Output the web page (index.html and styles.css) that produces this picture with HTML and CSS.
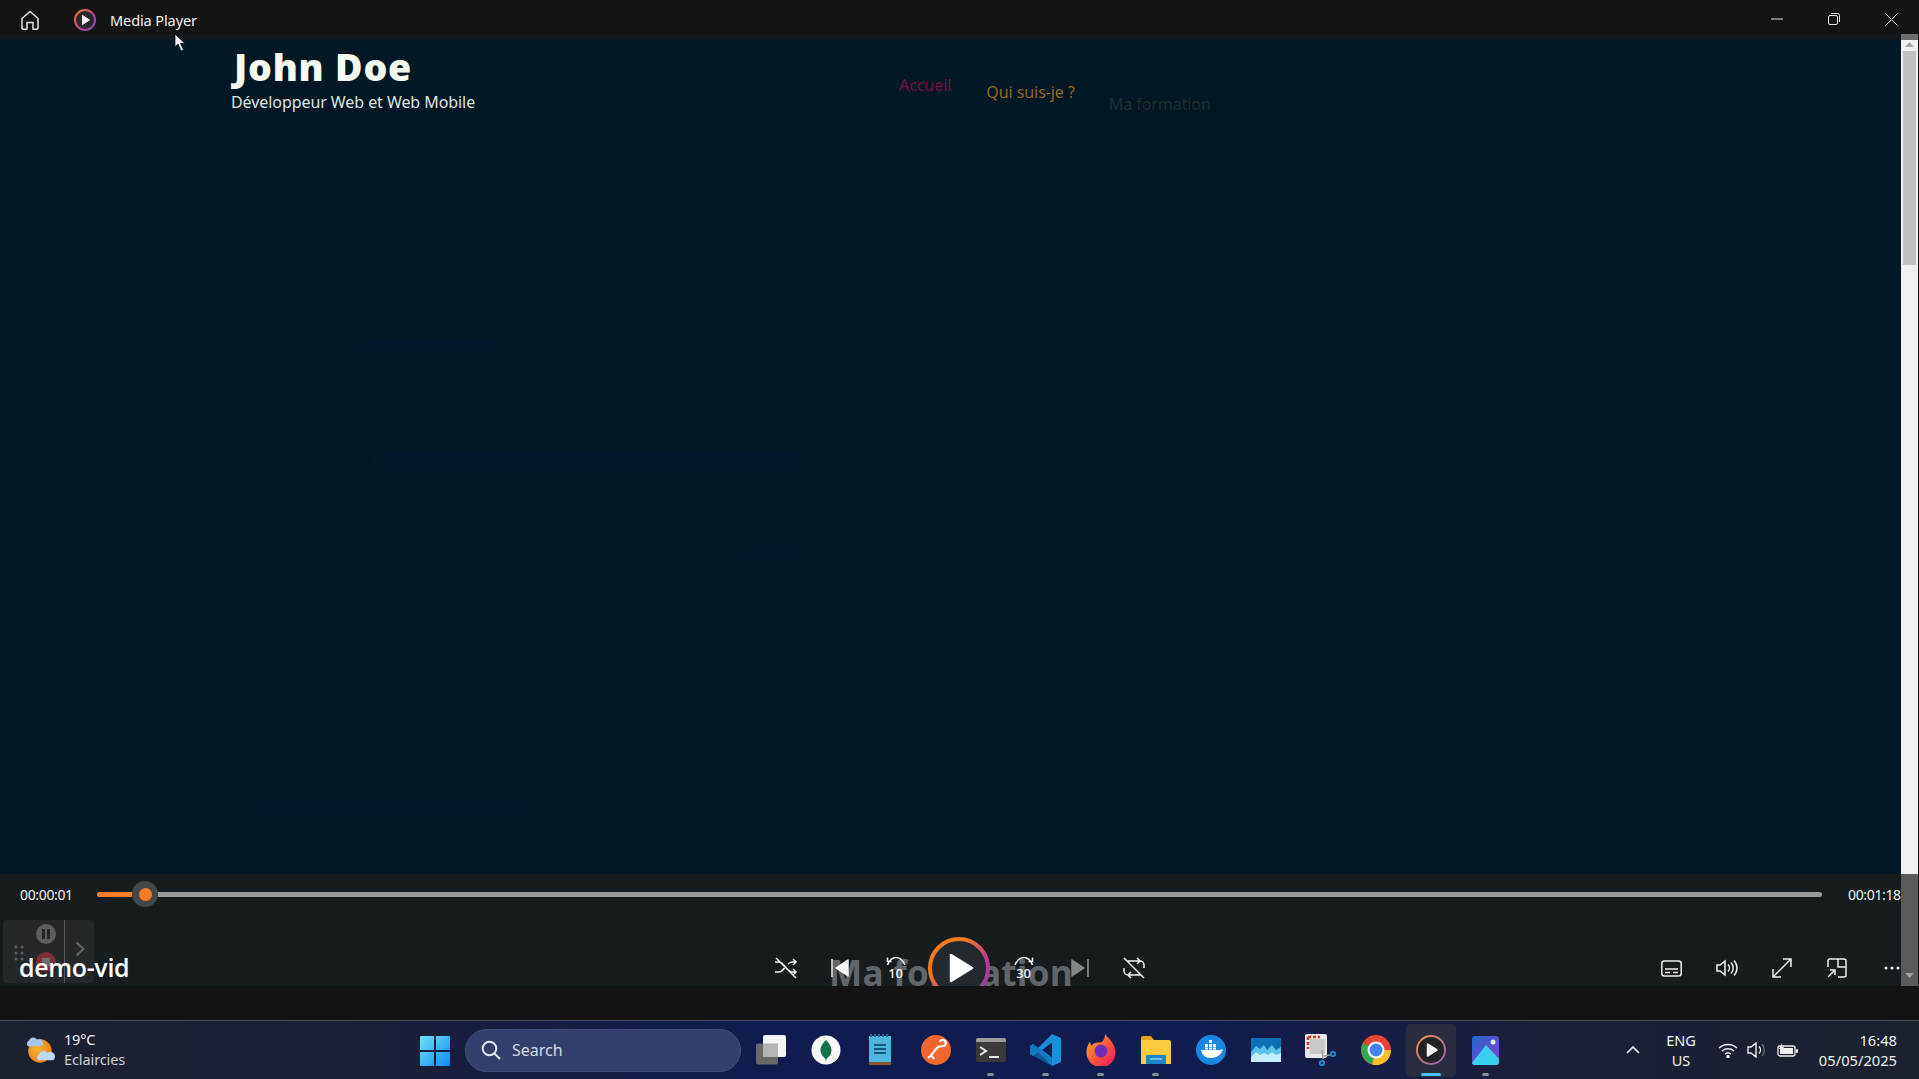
FILE: index.html
```html
<!DOCTYPE html>
<html lang="fr">
<head>
<meta charset="utf-8">
<title>Media Player</title>
<link rel="stylesheet" href="styles.css">
</head>
<body>
<div class="app">
  <header class="titlebar">
    <svg class="home-icon" width="22" height="22" viewBox="0 0 22 22" fill="none" stroke="#e8e8e8" stroke-width="1.5" stroke-linejoin="round"><path d="M3 9.5 11 2.5l8 7V19a1.2 1.2 0 0 1-1.2 1.2H14V13.5H8v6.700H4.200A1.200 1.200 0 0 1 3 19Z"/></svg>
    <svg class="app-logo" width="24" height="24" viewBox="0 0 24 24">
      <defs><linearGradient id="ringa" x1="0" y1="0" x2="1" y2="1"><stop offset="0" stop-color="#f47b20"/><stop offset=".6" stop-color="#b3429a"/><stop offset="1" stop-color="#7b4fc0"/></linearGradient></defs>
      <circle cx="12" cy="12" r="10" fill="#2a2a2e" stroke="url(#ringa)" stroke-width="2"/>
      <path d="M9.500 7.500v9l7-4.500Z" fill="#f2f2f2" stroke="#f2f2f2" stroke-linejoin="round"/>
    </svg>
    <span class="app-name">Media Player</span>
    <div class="win-buttons">
      <svg width="12" height="12" viewBox="0 0 12 12" stroke="#e6e6e6" fill="none"><path d="M0 6h12"/></svg>
      <svg width="12" height="12" viewBox="0 0 12 12" stroke="#e6e6e6" fill="none"><rect x=".5" y="2.500" width="9" height="9" rx="1.500"/><path d="M3 .5h6.500a2 2 0 0 1 2 2V9"/></svg>
      <svg width="13" height="13" viewBox="0 0 13 13" stroke="#e6e6e6" fill="none"><path d="M.5.5l12 12M12.500.5l-12 12"/></svg>
    </div>
  </header>

  <div class="viewport">
    <div class="player">
      <div class="strip"></div>
      <main class="video">
        <div class="site-header">
          <div class="brand">
            <h1 class="brand-name">John Doe</h1>
            <p class="brand-role">Développeur Web et Web Mobile</p>
          </div>
          <nav class="site-nav">
            <a class="nav-a">Accueil</a>
            <a class="nav-b">Qui suis-je ?</a>
            <a class="nav-c">Ma formation</a>
          </nav>
        </div>
        <i class="ghost ghost-1"></i>
        <i class="ghost ghost-2"></i>
        <i class="ghost ghost-3"></i>
        <i class="ghost ghost-4"></i>
        <i class="ghost ghost-5"></i>
        <i class="ghost ghost-6"></i>
        <i class="ghost ghost-7"></i>
      </main>
      <section class="controls">
        <div class="seek-row">
          <span class="time">00:00:01</span>
          <div class="seek">
            <div class="seek-done"></div>
            <div class="seek-knob"><div class="seek-dot"></div></div>
            <div class="seek-rest"></div>
          </div>
          <span class="time time-end">00:01:18</span>
        </div>
        <div class="float-widget">
          <svg class="grip" width="10" height="16" viewBox="0 0 10 16" fill="#5c6062"><circle cx="2" cy="2" r="1.500"/><circle cx="8" cy="2" r="1.500"/><circle cx="2" cy="8" r="1.500"/><circle cx="8" cy="8" r="1.500"/><circle cx="2" cy="14" r="1.500"/><circle cx="8" cy="14" r="1.500"/></svg>
          <div class="rec-btns">
            <span class="rec-pause"><i></i><i></i></span>
            <span class="rec-stop"><i></i></span>
          </div>
          <div class="widget-side"><svg width="10" height="16" viewBox="0 0 10 16" fill="none" stroke="#63676a" stroke-width="2"><path d="M1.500 1.500 8.500 8l-7 6.500"/></svg></div>
        </div>
        <div class="video-title">demo-vid</div>
        <div class="ghost-title">Ma formation</div>
        <div class="center-btns">
          <svg width="24" height="22" viewBox="0 0 24 22" fill="none" stroke="#f4f4f4" stroke-width="1.500"><path d="M1 5h4c5 0 8 10 13 10h4M19 12l3 3-3 3M1 15h4c2 0 4-2 5.500-4M14 7c1.200-1 2.500-2 4-2h4M19 2l3 3-3 3M2 1l20 20"/></svg>
          <svg width="20" height="20" viewBox="0 0 20 20"><path d="M1 1v18" stroke="#e8e8e8" stroke-width="1.500"/><path d="M17 2v16L5 10Z" fill="#f4f4f4" stroke="#f4f4f4" stroke-width="1.500" stroke-linejoin="round"/></svg>
          <span class="skip">
            <svg width="22" height="10" viewBox="0 0 22 10" fill="none" stroke="#f4f4f4" stroke-width="1.500"><path d="M2.500 9C4 4 8 1.500 11 1.500S18 4 20 9M2.500 1.500v4h4"/></svg>
            <span class="skip-num">10</span>
          </span>
          <svg width="62" height="62" viewBox="0 0 62 62">
            <defs><linearGradient id="ringb" x1="0" y1="0" x2="1" y2="1"><stop offset=".3" stop-color="#f07a1e"/><stop offset=".65" stop-color="#c03a90"/><stop offset="1" stop-color="#8a3fa8"/></linearGradient></defs>
            <circle cx="31" cy="31" r="29" fill="#24292d" stroke="url(#ringb)" stroke-width="4"/>
            <path d="M23 18v26l21-13Z" fill="#fff" stroke="#fff" stroke-width="2.500" stroke-linejoin="round"/>
          </svg>
          <span class="skip">
            <svg width="22" height="10" viewBox="0 0 22 10" fill="none" stroke="#f4f4f4" stroke-width="1.500"><path d="M2 9C4 4 8 1.500 11 1.500S18 4 19.500 9M19.500 1.500v4h-4"/></svg>
            <span class="skip-num">30</span>
          </span>
          <svg width="20" height="20" viewBox="0 0 20 20"><path d="M19 1v18" stroke="#9a9c9d" stroke-width="1.500"/><path d="M3 2v16l12-8Z" fill="#85888a" stroke="#85888a" stroke-width="1.500" stroke-linejoin="round"/></svg>
          <svg width="24" height="24" viewBox="0 0 24 24" fill="none" stroke="#f4f4f4" stroke-width="1.500"><path d="M5 5h13a4 4 0 0 1 4 4v3M15 2l3 3-3 3M19 19H6a4 4 0 0 1-4-4v-3M9 22l-3-3 3-3M2 2l20 20"/></svg>
        </div>
        <div class="right-btns">
          <svg width="21" height="17" viewBox="0 0 21 17" fill="none" stroke="#eee" stroke-width="1.500"><rect x=".8" y="1" width="19.400" height="15" rx="2.500"/><path d="M4 9h13M4 12.500h5M12 12.500h5"/></svg>
          <svg width="22" height="18" viewBox="0 0 22 18" fill="none" stroke="#eee" stroke-width="1.500"><path d="M1 6h3l5-4v14l-5-4H1ZM12 5.500a5 5 0 0 1 0 7M15 3.500a8 8 0 0 1 0 11M18 1.500a11 11 0 0 1 0 15"/></svg>
          <svg width="20" height="20" viewBox="0 0 20 20" fill="none" stroke="#eee" stroke-width="1.500"><path d="M1.500 18.500l17-17M11 1h8v8M1 11v8h8"/></svg>
          <svg width="20" height="20" viewBox="0 0 20 20" fill="none" stroke="#eee" stroke-width="1.500"><path d="M1 9V3a2 2 0 0 1 2-2h14a2 2 0 0 1 2 2v14a2 2 0 0 1-2 2h-6M11 1v8h8M1 19l7-7M3 12h5v5"/></svg>
          <svg width="16" height="4" viewBox="0 0 16 4" fill="#f4f4f4"><circle cx="2" cy="2" r="1.500"/><circle cx="8" cy="2" r="1.500"/><circle cx="14" cy="2" r="1.500"/></svg>
        </div>
      </section>
    </div>
    <aside class="scrollbar">
      <div class="sb-cap"></div>
      <div class="sb-track">
        <svg class="sb-up" width="9" height="5" viewBox="0 0 9 5" fill="#a6a6a6"><path d="M4.500 0 9 5H0Z"/></svg>
        <div class="sb-thumb"></div>
      </div>
      <div class="sb-lower">
        <svg width="9" height="5" viewBox="0 0 9 5" fill="#a0a0a0"><path d="M4.500 5 0 0h9Z"/></svg>
      </div>
    </aside>
    <div class="edge"></div>
  </div>

  <div class="band"></div>

  <footer class="taskbar">
    <div class="weather">
      <svg width="32" height="30" viewBox="0 0 34 32">
        <defs><radialGradient id="sun" cx=".4" cy=".4" r=".7"><stop offset="0" stop-color="#fbb636"/><stop offset="1" stop-color="#e8790e"/></radialGradient></defs>
        <circle cx="17" cy="17" r="12.500" fill="url(#sun)"/>
        <path d="M4 12a4 4 0 0 1 1-6 5 5 0 0 1 9-1 4 4 0 0 1 4 7Z" fill="#a9c9ec"/>
        <path d="M15 27a3.500 3.500 0 0 1 1-6 5 5 0 0 1 9-2 4 4 0 0 1 6 8Z" fill="#bfd7f2"/>
      </svg>
      <div class="weather-text"><span class="temp">19°C</span><span class="cond">Eclaircies</span></div>
    </div>
    <div class="task-center">
      <span class="task-item">
        <svg width="30" height="31" viewBox="0 0 30 31">
          <defs><linearGradient id="win" x1="0" y1="0" x2="1" y2="1"><stop offset="0" stop-color="#6fe0fb"/><stop offset="1" stop-color="#0f8df0"/></linearGradient></defs>
          <path d="M1 1h13v14H0V2a1 1 0 0 1 1-1ZM16 1h13a1 1 0 0 1 1 1v13H16ZM0 17h14v14H1a1 1 0 0 1-1-1ZM16 17h14v13a1 1 0 0 1-1 1H16Z" fill="url(#win)"/>
        </svg>
      </span>
      <div class="searchbox">
        <svg width="20" height="20" viewBox="0 0 20 20" fill="none" stroke="#dfe3ee" stroke-width="2"><circle cx="8.500" cy="8.500" r="6.800"/><path d="M13.500 13.500l5.500 5.500"/></svg>
        <span>Search</span>
      </div>
      <span class="task-item">
        <svg width="30" height="30" viewBox="0 0 30 30"><rect x="0" y="8.500" width="22" height="21" rx="2" fill="#696969"/><rect x="7" y="0" width="23" height="22" rx="2" fill="#f4f4f4"/><rect x="7" y="8.500" width="15" height="13.500" fill="#b4b4b4"/></svg>
      </span>
      <span class="task-item">
        <svg width="30" height="30" viewBox="0 0 30 30"><circle cx="15" cy="15" r="14.500" fill="#fafafa"/><path d="M15 5c4 4 5.500 7 5.500 10.500S18 22 15.500 24l-.5 3-.5-3C12 22 9.500 19 9.500 15.500S11 9 15 5Z" fill="#12734a"/></svg>
      </span>
      <span class="task-item">
        <svg width="23" height="32" viewBox="0 0 23 32"><rect x="0" y="2" width="22" height="26" fill="#4db6de"/><rect y="28" width="22" height="3" fill="#8a5a2e"/><path d="M5 11h12M5 15h12M5 19h12" stroke="#10597a" stroke-width="2"/><path d="M2 0v3M6 0v3M10 0v3M14 0v3M18 0v3" stroke="#1c6a8c" stroke-width="2"/></svg>
      </span>
      <span class="task-item">
        <svg width="30" height="30" viewBox="0 0 30 30"><circle cx="15" cy="15" r="15" fill="#f2672e"/><path d="M7 23c3-2 5-5 7-8l4-4M19 7a3 3 0 1 1 3 4l-5 1M11 21l2 3" fill="none" stroke="#fff" stroke-width="2.200"/></svg>
      </span>
      <span class="task-item running">
        <svg width="30" height="24" viewBox="0 0 30 24"><rect width="30" height="24" rx="2" fill="#3a3a3a"/><path d="M0 2a2 2 0 0 1 2-2h26a2 2 0 0 1 2 2v2H0Z" fill="#9c9c9c"/><path d="M4 9l6 4-6 4" fill="none" stroke="#eee" stroke-width="2"/><path d="M13 19h10" stroke="#eee" stroke-width="2"/></svg>
      </span>
      <span class="task-item running">
        <svg width="31" height="32" viewBox="0 0 31 32"><path d="M22 0l9 4v24l-9 4L8 18l-5 4-3-2V12l3-2 5 4Z" fill="#1a8fd8"/><path d="M22 8.500 12 16l10 7.500Z" fill="#0c1f52"/><path d="M0 12l3-2 19 14v8L0 20Z" fill="#0f6fb8" opacity=".7"/></svg>
      </span>
      <span class="task-item running">
        <svg width="30" height="32" viewBox="0 0 30 32">
          <defs><linearGradient id="ffx" x1="0" y1="0" x2="1" y2="1"><stop offset="0" stop-color="#ffb02a"/><stop offset=".55" stop-color="#ff4f3a"/><stop offset="1" stop-color="#e0186c"/></linearGradient></defs>
          <path d="M19 0c2 3 9 8 10 15a14.500 14.500 0 1 1-28.500 3C.5 14 2 10 4 7.500c0 2 .5 3 2 4C8 8 12 9 16 8c2-2 3-5 3-8Z" fill="url(#ffx)"/>
          <circle cx="15" cy="17" r="6.500" fill="#6c2dbd"/>
        </svg>
      </span>
      <span class="task-item running">
        <svg width="30" height="28" viewBox="0 0 30 28"><path d="M0 2a2 2 0 0 1 2-2h8l3 4H0Z" fill="#e0a31c"/><path d="M0 4h28a2 2 0 0 1 2 2v22H0Z" fill="#fccc3e"/><rect x="5" y="19" width="20" height="9" rx="1" fill="#1a86c8"/><rect x="9" y="22" width="12" height="1.800" fill="#7cc6ec"/></svg>
      </span>
      <span class="task-item">
        <svg width="30" height="30" viewBox="0 0 30 30"><circle cx="15" cy="15" r="15" fill="#1a87e2"/><path d="M5 15h19c1 0 2-1 3-1-1 5-6 9-12 9-6 0-9-3-10-8Z" fill="#fff"/><path d="M9 9h3v3H9ZM13 9h3v3h-3ZM13 5h3v3h-3ZM17 9h3v3h-3ZM9 12.500h3v2H9ZM13 12.500h3v2h-3ZM17 12.500h3v2h-3Z" fill="#fff"/></svg>
      </span>
      <span class="task-item">
        <svg width="30" height="24" viewBox="0 0 30 24"><rect width="30" height="24" fill="#0f6db4"/><path d="M0 14l5-6 4 3 4-4 3 5 5-5 4 5 5-3v15H0Z" fill="#5cc0e8"/><path d="M0 19l5-5 4 3 4-2 4 2 4-3 4 3 5-2v9H0Z" fill="#c4ecfa"/></svg>
      </span>
      <span class="task-item">
        <svg width="31" height="32" viewBox="0 0 31 32"><rect width="22" height="24" rx="2" fill="#e8e8ea"/><rect x="5" y="5" width="15" height="15" fill="#c8c8c8"/><path d="M3 3h12M3 3v12" stroke="#d03a24" stroke-width="2.500" stroke-dasharray="3 2" fill="none"/><path d="M17 16l1 9M19 22l6-1" stroke="#9a9a9a" stroke-width="1.500"/><circle cx="17" cy="29" r="2.200" fill="none" stroke="#1a8fd8" stroke-width="1.800"/><circle cx="28" cy="20" r="2.200" fill="none" stroke="#1a8fd8" stroke-width="1.800"/></svg>
      </span>
      <span class="task-item">
        <svg width="30" height="30" viewBox="0 0 30 30"><circle cx="15" cy="15" r="15" fill="#ea4335"/><path d="M15 15 2 8A15 15 0 0 0 11 29.500Z" fill="#34a853"/><path d="M15 15h15a15 15 0 0 1-19 14.500Z" fill="#fbc02d"/><circle cx="15" cy="15" r="7.500" fill="#3f82f0" stroke="#fff" stroke-width="2"/></svg>
      </span>
      <span class="task-item active">
        <svg width="30" height="30" viewBox="0 0 30 30">
          <defs><linearGradient id="ringc" x1="0" y1="0" x2="1" y2="1"><stop offset="0" stop-color="#f2924a"/><stop offset="1" stop-color="#8a5fb8"/></linearGradient></defs>
          <circle cx="15" cy="15" r="14" fill="#232326" stroke="url(#ringc)" stroke-width="2"/>
          <path d="M11.500 9v12l9.500-6Z" fill="#f1f1f1" stroke="#f1f1f1" stroke-width="1.500" stroke-linejoin="round"/>
        </svg>
      </span>
      <span class="task-item running">
        <svg width="27" height="29" viewBox="0 0 27 29">
          <defs><linearGradient id="pho" x1="0" y1="0" x2="1" y2="1"><stop offset="0" stop-color="#1f66d0"/><stop offset="1" stop-color="#8a3fd0"/></linearGradient></defs>
          <rect width="27" height="29" rx="3" fill="url(#pho)"/>
          <circle cx="21" cy="6" r="2.500" fill="#e8f0ff"/>
          <path d="M0 27 14 9l13 14v3a3 3 0 0 1-3 3H3a3 3 0 0 1-3-2Z" fill="#3cd0f0"/>
        </svg>
      </span>
    </div>
    <div class="tray">
      <svg class="tray-up" width="14" height="8" viewBox="0 0 14 8" fill="none" stroke="#f0f0f0" stroke-width="1.700"><path d="M1 7l6-6 6 6"/></svg>
      <div class="lang"><span>ENG</span><span>US</span></div>
      <svg class="tray-wifi" width="20" height="15" viewBox="0 0 20 15" fill="none" stroke="#f0f0f0" stroke-width="1.500"><path d="M1 5a13 13 0 0 1 18 0M4 8a9 9 0 0 1 12 0M7 11a4.500 4.500 0 0 1 6 0"/><circle cx="10" cy="13.500" r="1" fill="#f0f0f0"/></svg>
      <svg class="tray-vol" width="20" height="16" viewBox="0 0 20 16" fill="none" stroke="#f0f0f0" stroke-width="1.400"><path d="M1 5h3l5-4v14l-5-4H1ZM12 4.500a5 5 0 0 1 0 7"/><path d="M15 2a9 9 0 0 1 0 12" stroke="#6a6e78"/></svg>
      <svg class="tray-bat" width="21" height="15" viewBox="0 0 21 15"><rect x="1" y="3" width="17" height="10" rx="2" fill="none" stroke="#f0f0f0" stroke-width="1.300"/><rect x="3" y="5" width="13" height="6" fill="#f0f0f0"/><rect x="19" y="6" width="2" height="4" rx="1" fill="#f0f0f0"/><path d="M5 0 2 6h2L3 10l4-6H5Z" fill="#f0f0f0"/></svg>
      <div class="clock"><span>16:48</span><span>05/05/2025</span></div>
    </div>
  </footer>
  <svg class="cursor" width="13" height="19" viewBox="0 0 13 19"><path d="M1 1v13l3-3 3 7 2.500-1-3-6.500h4.500Z" fill="#f2f2f2" stroke="#111" stroke-width=".8"/></svg>
</div>
</body>
</html>
```
FILE: styles.css
```css
* { box-sizing: border-box; }
html, body { margin: 0; padding: 0; background: #141414; overflow: hidden; }
.app {
  position: relative;
  width: 1919px;
  height: 1079px;
  display: flex;
  flex-direction: column;
  overflow: hidden;
  font-family: "Noto Sans", "Open Sans", sans-serif;
  color: #fff;
}
svg { display: block; flex: none; }

.titlebar {
  height: 34px;
  flex: none;
  display: flex;
  align-items: center;
  background: #141414;
  padding: 6px 0 0 19px;
}
.app-logo { margin-left: 32px; }
.app-name { margin-left: 13px; font-size: 14.500px; letter-spacing: -.1px; color: #f2f2f2; }
.win-buttons { margin-left: auto; display: flex; align-items: center; gap: 45px; padding-right: 21px; margin-top: -2px; }

.viewport { height: 952px; flex: none; display: flex; }
.player { flex: 1; min-width: 0; display: flex; flex-direction: column; }
.strip { height: 6px; flex: none; background: #14191d; }
.video { flex: 1; position: relative; background: #001724; min-height: 0; }

.site-header { display: flex; padding: 8px 0 0 231px; }
.brand { width: 245px; flex: none; }
.brand-name { margin: 0 0 0 3px; font-family: "Open Sans", sans-serif; font-size: 37.500px; line-height: 38px; font-weight: 800; letter-spacing: .8px; color: #f6fbf2; }
.brand-role { margin: 5px 0 0; font-size: 16px; line-height: 22px; letter-spacing: -.07px; white-space: nowrap; color: #dfe6e2; }
.site-nav { display: flex; margin-left: 423px; font-size: 16px; line-height: 22px; letter-spacing: -.07px; }
.nav-a { margin-top: 26px; color: #7c1040; }
.nav-b { margin: 33px 0 0 35px; color: #94671f; }
.nav-c { margin: 45px 0 0 34px; color: #232e2e; }

.ghost { position: absolute; display: block; height: 14px; background: #001622; }
.ghost-1 { left: 232px; top: 299px; width: 128px; }
.ghost-2 { left: 360px; top: 299px; width: 135px; background: #001727; }
.ghost-3 { left: 242px; top: 412px; width: 130px; }
.ghost-4 { left: 385px; top: 412px; width: 415px; height: 20px; background: #001727; }
.ghost-5 { left: 650px; top: 506px; width: 85px; }
.ghost-6 { left: 745px; top: 506px; width: 55px; background: #001727; }
.ghost-7 { left: 250px; top: 761px; width: 276px; background: #001727; }

.controls { height: 112px; flex: none; position: relative; background: #171c1f; overflow: hidden; }
.seek-row { display: flex; align-items: center; height: 40px; padding: 0 2px 0 20px; }
.time { font-size: 14px; letter-spacing: -.35px; color: #f2f2f2; width: 77px; }
.time-end { width: 51px; white-space: nowrap; margin-left: 26px; }
.seek { flex: 1; display: flex; align-items: center; }
.seek-done { width: 35px; height: 5px; border-radius: 3px 0 0 3px; background: #f97d27; }
.seek-knob { width: 26px; height: 26px; border-radius: 50%; background: #45484a; display: flex; align-items: center; justify-content: center; }
.seek-dot { width: 13px; height: 13px; border-radius: 50%; background: #f97d27; }
.seek-rest { flex: 1; height: 5px; border-radius: 0 3px 3px 0; background: #9a9c9c; }

.float-widget {
  position: absolute; left: 3px; top: 46px; width: 91px; height: 63px;
  display: flex; background: #25282a; border-radius: 4px;
}
.grip { margin: 25px 0 0 11px; }
.rec-btns { width: 40px; display: flex; flex-direction: column; align-items: center; gap: 8px; padding: 4px 0 0 3px; }
.rec-pause, .rec-stop { width: 20px; height: 20px; border-radius: 50%; display: flex; align-items: center; justify-content: center; gap: 2px; flex: none; }
.rec-pause { background: #5c5e60; }
.rec-pause i { width: 3px; height: 10px; background: #25282a; }
.rec-stop { background: #7a3034; }
.rec-stop i { width: 8px; height: 8px; background: #6d6d6d; }
.widget-side { flex: 1; border-left: 1px solid #55585a; display: flex; justify-content: center; align-items: flex-start; padding-top: 21px; }

.video-title { position: absolute; left: 19px; top: 76px; font-family: "Open Sans", sans-serif; font-size: 25px; line-height: 34px; font-weight: 600; letter-spacing: -.35px; color: #fff; }
.ghost-title { position: absolute; left: 829px; top: 77px; font-family: "Open Sans", sans-serif; font-size: 35.200px; line-height: 42px; font-weight: 700; white-space: nowrap; color: #62666a; letter-spacing: .2px; }

.center-btns {
  position: absolute; left: 758px; top: 63px; height: 62px;
  display: grid; grid-template-columns: 55px 55px 55px 71px 59px 51px 59px;
  align-items: center; justify-items: center;
}
.skip { width: 24px; display: flex; flex-direction: column; align-items: center; margin-top: -2px; }
.skip-num { font-size: 13px; line-height: 12px; margin-top: 1px; font-weight: 500; letter-spacing: -.3px; color: #f4f4f4; }
.right-btns {
  position: absolute; left: 1644px; top: 80px; height: 28px;
  display: grid; grid-template-columns: repeat(5, 55px);
  align-items: center; justify-items: center;
}

.scrollbar { width: 17px; flex: none; display: flex; flex-direction: column; background: #f0f0f0; }
.sb-cap { height: 6px; flex: none; background: #6b6b6b; }
.sb-track { height: 834px; flex: none; position: relative; display: flex; flex-direction: column; align-items: center; }
.sb-up { margin-top: 2px; }
.sb-thumb { width: 13px; height: 214px; margin-top: 4px; background: #c1c1c1; }
.sb-lower { flex: 1; background: #5a5a5a; display: flex; align-items: flex-end; justify-content: center; padding-bottom: 8px; }
.edge { width: 1px; flex: none; background: #141414; }

.band { height: 34px; flex: none; background: #141414; }

.taskbar {
  position: relative;
  height: 59px; flex: none; display: flex; align-items: center;
  border-top: 1px solid #4a4e58;
  background: linear-gradient(90deg, #1c2130 0%, #1a2036 18%, #101c50 40%, #111c50 62%, #1a2038 80%, #1b212d 100%);
}
.weather { width: 407px; flex: none; display: flex; align-items: center; padding-left: 24px; }
.weather-text { display: flex; flex-direction: column; margin: -2px 0 0 8px; line-height: 20px; font-size: 14.500px; }
.temp { color: #f2f2f2; letter-spacing: -.2px; }
.cond { color: #cdd0d8; letter-spacing: -.1px; }

.task-center { display: flex; align-items: center; }
.task-item { width: 55px; height: 53px; flex: none; display: flex; align-items: center; justify-content: center; position: relative; border-radius: 5px; }
.task-item.running::after { content: ""; position: absolute; left: 24px; bottom: 1px; width: 7px; height: 3px; border-radius: 2px; background: #8a8d94; }
.task-item.active { background: #2a2d3e; width: 50px; margin: 0 2.500px; }
.task-item.active::after { content: ""; position: absolute; left: 15px; bottom: 1px; width: 20px; height: 3px; border-radius: 2px; background: #45c0f5; }
.searchbox {
  width: 276px; height: 43px; flex: none; margin: 0 2px 0 3px;
  display: flex; align-items: center; padding-left: 15px; gap: 11px;
  border-radius: 22px; background: #33406e; border: 1px solid #454f78;
  font-size: 16px; color: #d6d9e4;
}
.tray { position: absolute; right: 0; top: 0; height: 58px; width: 300px; display: flex; align-items: center; }
.tray-up { margin-left: 7px; }
.lang { width: 50px; margin-left: 16px; display: flex; flex-direction: column; align-items: center; font-size: 14.500px; line-height: 20px; letter-spacing: -.1px; color: #f0f0f0; }
.tray-wifi { margin-left: 12px; }
.tray-vol { margin-left: 9px; }
.tray-bat { margin-left: 10px; }
.clock { margin-left: auto; padding-right: 22px; display: flex; flex-direction: column; align-items: flex-end; font-size: 14.700px; line-height: 20px; color: #f0f0f0; }

.cursor { position: absolute; left: 174px; top: 33px; }
```
